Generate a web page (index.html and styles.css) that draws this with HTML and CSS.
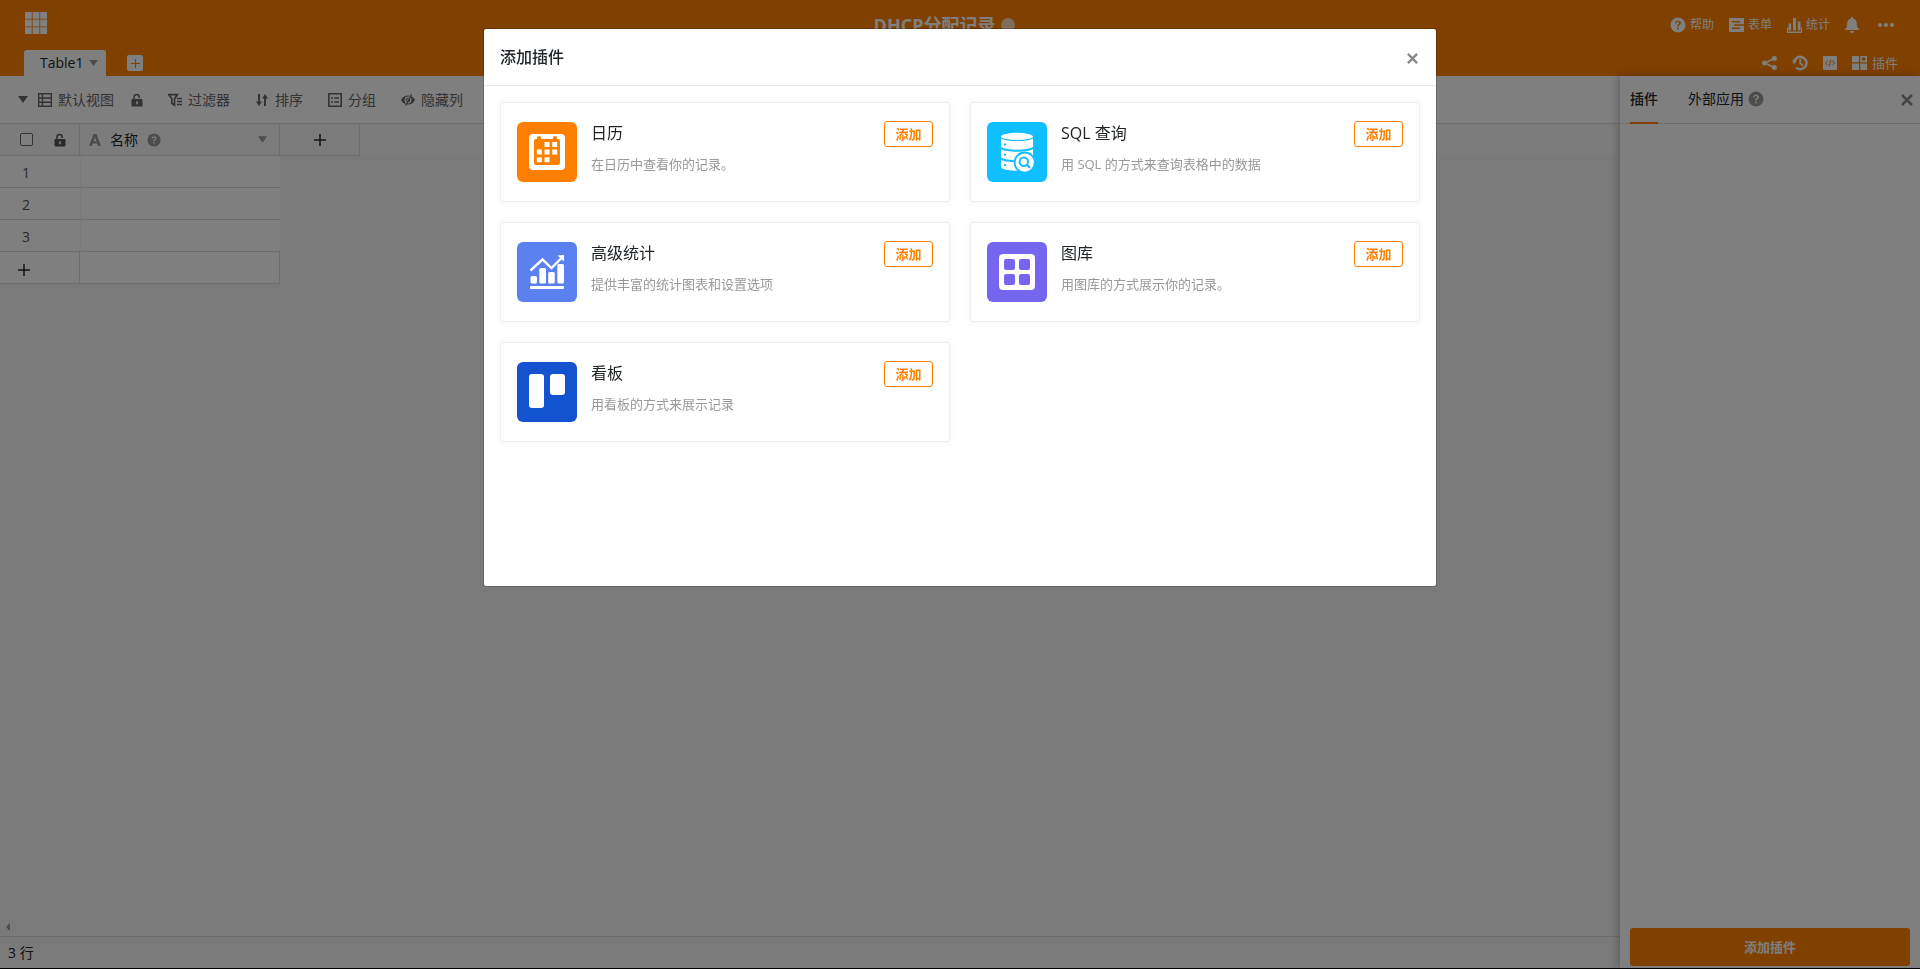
FILE: index.html
```html
<!DOCTYPE html>
<html lang="zh-CN">
<head>
  <meta charset="UTF-8" />
  <meta name="viewport" content="width=device-width, initial-scale=1" />
  <title>DHCP分配记录</title>
  <link rel="stylesheet" href="styles.css">
</head>
<body>
  <!-- shared icons -->
  <svg class="sprite" aria-hidden="true">
    <symbol id="icon-lock" viewBox="0 0 12 14">
      <path d="M3 7V4a2.6 2.6 0 0 1 5.2 0v1" fill="none" stroke="currentColor" stroke-width="1.5"/>
      <path fill-rule="evenodd" d="M1.500 6h9a1 1 0 0 1 1 1v5.500a1 1 0 0 1-1 1h-9a1 1 0 0 1-1-1V7a1 1 0 0 1 1-1zM5.200 8.200v3h1.600v-3z"/>
    </symbol>
    <symbol id="icon-help" viewBox="0 0 16 16">
      <path fill-rule="evenodd" d="M8 .5a7.500 7.500 0 1 1 0 15a7.500 7.500 0 0 1 0-15zM5.300 6.300h1.500c0-.8.5-1.300 1.200-1.300s1.200.4 1.200 1c0 .6-.3.9-.9 1.300-.8.5-1.100 1-1.100 2v.2h1.500c0-.6.2-.9.9-1.400.8-.5 1.200-1.100 1.200-2.100 0-1.400-1.100-2.300-2.700-2.300-1.700 0-2.800 1-2.800 2.600zM7.100 10.700v1.600h1.700v-1.600z"/>
    </symbol>
    <symbol id="icon-close" viewBox="0 0 12 12">
      <path d="M1 1l10 10M11 1L1 11" fill="none" stroke="currentColor" stroke-width="2.600"/>
    </symbol>
    <symbol id="icon-caret" viewBox="0 0 10 7">
      <path d="M0 0h10L5 7z"/>
    </symbol>
    <symbol id="icon-plus" viewBox="0 0 12 12">
      <path d="M6 0v12M0 6h12" fill="none" stroke="currentColor" stroke-width="1.500"/>
    </symbol>
  </svg>

  <div class="app">
    <header class="header">
      <div class="header-top">
        <a class="logo" href="#" aria-label="首页">
          <svg width="22" height="22" viewBox="0 0 22 22"><path d="M0 0h6.800v6.800H0zM7.600 0h6.800v6.800H7.600zM15.200 0H22v6.800h-6.800zM0 7.600h6.800v6.800H0zM7.600 7.600h6.800v6.800H7.600zM15.200 7.600H22v6.800h-6.800zM0 15.200h6.800V22H0zM7.600 15.200h6.800V22H7.600zM15.200 15.200H22V22h-6.800z"/></svg>
        </a>
        <h1 class="base-name">DHCP分配记录 <span class="base-dot"></span></h1>
        <div class="header-actions">
          <button class="header-btn"><svg width="16" height="16"><use href="#icon-help"/></svg>帮助</button>
          <button class="header-btn">
            <svg width="15" height="14" viewBox="0 0 15 14"><path fill-rule="evenodd" d="M1 0h13a1 1 0 0 1 1 1v12a1 1 0 0 1-1 1H1a1 1 0 0 1-1-1V1a1 1 0 0 1 1-1zM3 3v1.500h8V3zM5 6.300v1.500h10V6.300zM3 9.600v1.500h8V9.600z"/></svg>表单
          </button>
          <button class="header-btn">
            <svg width="15" height="15" viewBox="0 0 15 15"><path d="M1.500 5.500h2.700v7H1.500zM6 0h3v12.500H6zM10.800 3.500h2.700v9h-2.700zM0 9.500h1v4h13v-4h1V15H0z"/></svg>统计
          </button>
          <button class="header-btn" aria-label="通知">
            <svg width="14" height="16" viewBox="0 0 14 16"><path d="M7 0a1.200 1.200 0 0 1 1.200 1.200v.4C10.600 2.200 11.800 4 11.800 6.500c0 3.200.6 4.300 2.200 5.500v1H0v-1c1.600-1.200 2.200-2.300 2.200-5.500 0-2.500 1.200-4.300 3.600-4.900v-.4A1.200 1.200 0 0 1 7 0zM5 14h4a2 2 0 0 1-4 0z"/></svg>
          </button>
          <button class="header-btn" aria-label="更多">
            <svg width="16" height="4" viewBox="0 0 16 4"><circle cx="2" cy="2" r="2"/><circle cx="8" cy="2" r="2"/><circle cx="14" cy="2" r="2"/></svg>
          </button>
        </div>
      </div>
      <div class="header-tabs">
        <button class="table-tab">Table1 <svg width="9" height="6"><use href="#icon-caret"/></svg></button>
        <button class="add-tab" aria-label="添加表"><svg width="9" height="9"><use href="#icon-plus"/></svg></button>
        <div class="tab-actions">
          <button class="header-btn" aria-label="共享">
            <svg width="15" height="14" viewBox="0 0 15 14"><path d="M12 2.500L3 7l9 4.500" fill="none" stroke="currentColor" stroke-width="1.500"/><circle cx="12.300" cy="2.500" r="2.500"/><circle cx="2.500" cy="7" r="2.500"/><circle cx="12.300" cy="11.500" r="2.500"/></svg>
          </button>
          <button class="header-btn" aria-label="历史">
            <svg width="16" height="16" viewBox="0 0 16 16"><path d="M2.200 7A6.200 6.200 0 1 1 4 12.500" fill="none" stroke="currentColor" stroke-width="2.400"/><path d="M0 5.500h5L2.400 9.300z"/><path d="M8.200 4v4.500l3 2" fill="none" stroke="currentColor" stroke-width="1.800"/></svg>
          </button>
          <button class="header-btn" aria-label="脚本">
            <svg width="14" height="14" viewBox="0 0 14 14"><rect width="14" height="14" rx="1"/><path class="cut" d="M4.800 4.500L2.500 7l2.300 2.500M9.200 4.500L11.500 7 9.200 9.500M7.800 3.800L6.200 10.200"/></svg>
          </button>
          <button class="header-btn header-btn-plugin">
            <svg width="15" height="14" viewBox="0 0 15 14"><path fill-rule="evenodd" d="M0 0h7v6.300H0zM8.200 0H15v6.300H8.200zM10 1.600v3h3.300v-3zM0 7.600h7V14H0zM8.200 7.600H15V14H8.200z"/></svg>插件
          </button>
        </div>
      </div>
    </header>

    <div class="workspace">
      <main class="table-view">
        <div class="toolbar">
          <button class="tool tool-caret" aria-label="视图列表"><svg width="10" height="7"><use href="#icon-caret"/></svg></button>
          <button class="tool">
            <svg width="14" height="14" viewBox="0 0 14 14"><path d="M.7.7h12.600v12.600H.7zM.7 5h12.600M.7 9.200h12.600M4.500.7v12.600" fill="none" stroke="currentColor" stroke-width="1.400"/></svg>默认视图
          </button>
          <button class="tool tool-lock" aria-label="锁定视图"><svg width="12" height="14"><use href="#icon-lock"/></svg></button>
          <button class="tool">
            <svg width="14" height="14" viewBox="0 0 14 14"><path d="M.8 1.700h8.600L6.500 5.800v6.500l-2.700-2V5.800zM9 5.500h5M9 8.500h5M9 11.500h5" fill="none" stroke="currentColor" stroke-width="1.700"/></svg>过滤器
          </button>
          <button class="tool">
            <svg width="14" height="14" viewBox="0 0 14 14"><path d="M4 1v10M10 13V3" fill="none" stroke="currentColor" stroke-width="2"/><path d="M1 8.500h6L4 13zM13 5.500H7L10 1z"/></svg>排序
          </button>
          <button class="tool">
            <svg width="14" height="14" viewBox="0 0 14 14"><path d="M.8.8h12.400v12.400H.8zM3 5h2M6.300 5H11M3 9h2M6.300 9H11" fill="none" stroke="currentColor" stroke-width="1.600"/></svg>分组
          </button>
          <button class="tool">
            <svg width="14" height="12" viewBox="0 0 14 12"><path fill-rule="evenodd" d="M0 6c1.600-3 4-4.600 7-4.600S12.400 3 14 6c-1.600 3-4 4.600-7 4.600S1.600 9 0 6zM3.600 6a3.400 3.400 0 0 0 6.800 0a3.400 3.400 0 0 0-6.800 0zM4.800 6a2.200 2.200 0 0 1 4.400 0a2.200 2.200 0 0 1-4.400 0z"/><path class="slash" d="M9.700 0L3.700 11.500"/><path d="M10.600.3L4.600 11.800" fill="none" stroke="currentColor" stroke-width="1.200"/></svg>隐藏列
          </button>
        </div>

        <div class="grid">
          <table class="records">
            <thead>
              <tr>
                <th class="col-index">
                  <div class="index-head">
                    <input type="checkbox" aria-label="全选">
                    <svg width="12" height="14"><use href="#icon-lock"/></svg>
                  </div>
                </th>
                <th class="col-name">
                  <div class="name-head">
                    <svg class="muted" width="12" height="12" viewBox="0 0 12 12"><path fill-rule="evenodd" d="M4.500 0h3L12 12H9.200L8.200 9.400H3.800L2.800 12H0zM6 3.200L4.600 7.200h2.800z"/></svg>
                    <span>名称</span>
                    <svg class="muted" width="14" height="14"><use href="#icon-help"/></svg>
                    <svg class="muted name-caret" width="9" height="7"><use href="#icon-caret"/></svg>
                  </div>
                </th>
                <th class="col-add"><button class="plus" aria-label="添加列"><svg width="12" height="12"><use href="#icon-plus"/></svg></button></th>
                <th class="col-rest"></th>
              </tr>
            </thead>
            <tbody>
              <tr><td class="index">1</td><td class="cell"></td></tr>
              <tr><td class="index">2</td><td class="cell"></td></tr>
              <tr><td class="index">3</td><td class="cell"></td></tr>
              <tr class="add-row"><td class="index"><button class="plus" aria-label="添加行"><svg width="12" height="12"><use href="#icon-plus"/></svg></button></td><td class="cell"></td></tr>
            </tbody>
          </table>
          <svg class="scroll-arrow" width="4" height="8" viewBox="0 0 4 8"><path d="M4 0v8L0 4z"/></svg>
        </div>
        <div class="table-footer">3 行</div>
      </main>

      <aside class="side-panel">
        <div class="panel-head">
          <button class="panel-tab active">插件</button>
          <button class="panel-tab">外部应用 <svg width="16" height="16"><use href="#icon-help"/></svg></button>
          <button class="panel-close" aria-label="关闭面板"><svg width="12" height="12"><use href="#icon-close"/></svg></button>
        </div>
        <div class="panel-body"></div>
        <button class="panel-add">添加插件</button>
      </aside>
    </div>
  </div>

  <div class="overlay">
    <section class="modal" role="dialog" aria-labelledby="modal-title">
      <div class="modal-head">
        <h2 id="modal-title">添加插件</h2>
        <button class="modal-close" aria-label="关闭"><svg width="11" height="11"><use href="#icon-close"/></svg></button>
      </div>
      <div class="modal-body">
        <article class="plugin">
          <svg class="plugin-icon" width="60" height="60" viewBox="0 0 60 60">
            <rect width="60" height="60" rx="6" fill="#ff8000"/>
            <rect x="12" y="12" width="36" height="36" rx="4" fill="#fff"/>
            <path fill="#ff8000" d="M19 17h1v-1a1.500 1.500 0 0 1 4 0v1h12v-1a1.500 1.500 0 0 1 4 0v1h1a2 2 0 0 1 2 2v22a2 2 0 0 1-2 2H19a2 2 0 0 1-2-2V19a2 2 0 0 1 2-2z"/>
            <path fill="#fff" d="M27.500 20h5v5h-5zM35.200 20h5v5h-5zM19.800 27.500h5v5h-5zM27.500 27.500h5v5h-5zM35.200 27.500h5v5h-5zM19.800 35.200h5v5h-5zM27.500 35.200h5v5h-5z"/>
          </svg>
          <div class="plugin-text">
            <h3>日历</h3>
            <p>在日历中查看你的记录。</p>
          </div>
          <button class="plugin-add">添加</button>
        </article>

        <article class="plugin">
          <svg class="plugin-icon" width="60" height="60" viewBox="0 0 60 60">
            <rect width="60" height="60" rx="6" fill="#0fbfff"/>
            <ellipse cx="30" cy="14.500" rx="16" ry="3.700" fill="#fff"/>
            <path fill="#fff" d="M14 16.500c4 3.400 28 3.400 32 0v8.200c-4 4-28 4-32 0zM14 27c4 3.600 28 3.600 32 0v8.200c-4 4-28 4-32 0zM14 37.400c4 3.600 28 3.600 32 0v8c-4 4.300-28 4.300-32 0z"/>
            <path fill="#0fbfff" d="M17 21.500h2v2h-2zM17 31.800h2v2h-2zM17 42h2v2h-2z"/>
            <circle cx="37.700" cy="40.600" r="11" fill="#0fbfff"/>
            <circle cx="37.700" cy="40.600" r="9.200" fill="#fff"/>
            <circle cx="36.800" cy="39.700" r="4.200" fill="none" stroke="#0fbfff" stroke-width="2"/>
            <path d="M39.800 42.700l3.200 3.200" stroke="#0fbfff" stroke-width="2.200"/>
          </svg>
          <div class="plugin-text">
            <h3>SQL 查询</h3>
            <p>用 SQL 的方式来查询表格中的数据</p>
          </div>
          <button class="plugin-add">添加</button>
        </article>

        <article class="plugin">
          <svg class="plugin-icon" width="60" height="60" viewBox="0 0 60 60">
            <rect width="60" height="60" rx="6" fill="#5a81ef"/>
            <path d="M13.500 28.500L25.500 17.500l9 8.500L44 16.500" fill="none" stroke="#fff" stroke-width="2.400"/>
            <path fill="#fff" d="M47 13v6.500L40.500 13.500z"/>
            <rect x="13.500" y="34" width="6.500" height="7.500" rx="1.500" fill="#fff"/>
            <rect x="22.300" y="26" width="6.700" height="15.500" rx="1.500" fill="#fff"/>
            <rect x="31.200" y="30" width="6.600" height="11.500" rx="1.500" fill="#fff"/>
            <rect x="40.300" y="22" width="6.700" height="19.500" rx="1.500" fill="#fff"/>
            <rect x="13" y="44" width="34" height="3" rx="1" fill="#fff"/>
          </svg>
          <div class="plugin-text">
            <h3>高级统计</h3>
            <p>提供丰富的统计图表和设置选项</p>
          </div>
          <button class="plugin-add">添加</button>
        </article>

        <article class="plugin">
          <svg class="plugin-icon" width="60" height="60" viewBox="0 0 60 60">
            <rect width="60" height="60" rx="6" fill="#7666ef"/>
            <rect x="12" y="12" width="36" height="36" rx="4" fill="#fff"/>
            <g fill="#7666ef"><rect x="17" y="17" width="11" height="11" rx="2"/><rect x="32" y="17" width="11" height="11" rx="2"/><rect x="17" y="32" width="11" height="11" rx="2"/><rect x="32" y="32" width="11" height="11" rx="2"/></g>
          </svg>
          <div class="plugin-text">
            <h3>图库</h3>
            <p>用图库的方式展示你的记录。</p>
          </div>
          <button class="plugin-add">添加</button>
        </article>

        <article class="plugin">
          <svg class="plugin-icon" width="60" height="60" viewBox="0 0 60 60">
            <rect width="60" height="60" rx="6" fill="#1453cf"/>
            <rect x="12" y="12" width="15" height="34" rx="3" fill="#fff"/>
            <rect x="33" y="12" width="15" height="21" rx="3" fill="#fff"/>
          </svg>
          <div class="plugin-text">
            <h3>看板</h3>
            <p>用看板的方式来展示记录</p>
          </div>
          <button class="plugin-add">添加</button>
        </article>
      </div>
    </section>
  </div>
</body>
</html>
```

FILE: styles.css
```css
* {
  box-sizing: border-box;
}
body {
  margin: 0;
  font-family: 'Open Sans', 'Noto Sans CJK SC', sans-serif;
  font-size: 14px;
  line-height: 20px;
  color: #212529;
}
h1, h2, h3, p {
  margin: 0;
  font-weight: 400;
}
button {
  display: flex;
  align-items: center;
  padding: 0;
  border: none;
  background: none;
  font: inherit;
  color: inherit;
  white-space: nowrap;
  cursor: pointer;
}
svg {
  display: block;
  flex-shrink: 0;
  fill: currentColor;
}
.sprite {
  display: none;
}
.app {
  display: flex;
  flex-direction: column;
  height: 100vh;
  border-bottom: 1px solid #000;
}

/* header */
.header {
  background-color: #ff8000;
  color: #fff;
}
.header-top {
  display: grid;
  grid-template-columns: 1fr auto 1fr;
  align-items: center;
  height: 50px;
  padding: 0 26px 4px 25px;
}
.logo {
  width: 22px;
  color: #fff;
}
.base-name {
  display: flex;
  align-items: center;
  gap: 6px;
  padding: 4px 30px 0 0;
  font-size: 18px;
  line-height: 24px;
  font-weight: 700;
}
.base-dot {
  width: 14px;
  height: 14px;
  border-radius: 50%;
  background-color: #ffd9b3;
}
.header-actions {
  display: flex;
  justify-content: flex-end;
  gap: 15px;
  padding-top: 4px;
}
.header-actions .header-btn:last-child {
  margin-left: 4px;
}
.header-btn {
  gap: 4px;
  font-size: 12px;
}
.header-tabs {
  display: flex;
  align-items: center;
  height: 26px;
  padding: 0 22px 0 24px;
}
.table-tab {
  gap: 6px;
  height: 26px;
  padding: 0 8px 0 16px;
  border-radius: 3px 3px 0 0;
  background-color: #fff;
  color: #212529;
}
.table-tab svg {
  color: #999;
}
.add-tab {
  justify-content: center;
  width: 16px;
  height: 16px;
  margin-left: 21px;
  border-radius: 2px;
  background-color: #fff;
  color: #ff8000;
}
.tab-actions {
  display: flex;
  gap: 15px;
  margin-left: auto;
}
.header-btn-plugin {
  gap: 5px;
  font-size: 13px;
}
.cut {
  fill: none;
  stroke: #ff8000;
}

/* table view */
.workspace {
  display: flex;
  flex: 1;
  min-height: 0;
}
.table-view {
  display: flex;
  flex: 1;
  flex-direction: column;
  min-width: 0;
  background-color: #f5f5f5;
}
.toolbar {
  display: flex;
  align-items: center;
  gap: 25px;
  height: 48px;
  padding: 0 18px;
  border-bottom: 1px solid #dbdbdb;
  background-color: #fff;
  color: #666;
}
.tool {
  gap: 6px;
}
.tool-caret {
  margin-right: -15px;
}
.tool-lock {
  margin-left: -8px;
}
.slash {
  fill: none;
  stroke: #fff;
}
.grid {
  display: flex;
  flex: 1;
  flex-direction: column;
  justify-content: space-between;
}
.records {
  width: 100%;
  border-collapse: separate;
  border-spacing: 0;
  table-layout: fixed;
}
.records th {
  height: 32px;
  padding: 0;
  border-right: 1px solid #dbdbdb;
  border-bottom: 1px solid #dbdbdb;
  background-color: #f9f9f9;
  font-weight: 400;
}
.records .col-index {
  width: 80px;
}
.records .col-name {
  width: 200px;
}
.records .col-add {
  width: 80px;
}
.records .col-rest {
  border: none;
}
.records td {
  height: 32px;
  padding: 0;
  border-bottom: 1px solid #dbdbdb;
  background-color: #fff;
}
.records .cell {
  border-left: 1px solid #f4f4f4;
}
.records .index {
  padding: 2px 0 0 22px;
  color: #555;
}
.records .add-row .index {
  padding: 4px 0 0 18px;
}
.records .add-row td {
  border-right: 1px solid #dbdbdb;
  border-left: none;
}
.index-head {
  display: flex;
  align-items: center;
  gap: 21px;
  padding-left: 20px;
  color: #555;
}
.index-head input {
  appearance: none;
  width: 13px;
  height: 13px;
  margin: 0;
  border: 1px solid #666;
  border-radius: 2px;
  background-color: #fff;
}
.name-head {
  display: flex;
  align-items: center;
  gap: 9px;
  padding: 0 12px 0 9px;
}
.muted {
  color: #999;
}
.name-caret {
  margin-left: auto;
}
.col-add .plus {
  margin: 0 auto;
}
.plus {
  color: #212529;
}
.scroll-arrow {
  margin: 0 6px 5px;
  color: #999;
}
.table-footer {
  height: 32px;
  padding: 6px 8px;
  border-top: 1px solid #dbdbdb;
}

/* plugin side panel */
.side-panel {
  display: flex;
  flex-direction: column;
  width: 300px;
  background-color: #fff;
  box-shadow: -2px 0 8px rgba(0, 0, 0, 0.25);
}
.panel-head {
  display: flex;
  gap: 30px;
  height: 48px;
  padding: 0 7px 0 10px;
  border-bottom: 1px solid #dbdbdb;
}
.panel-tab {
  gap: 4px;
  height: 48px;
  border-bottom: 2px solid transparent;
}
.panel-tab svg {
  color: #999;
}
.panel-tab.active {
  border-color: #ff8000;
  font-weight: 500;
}
.panel-close {
  margin-left: auto;
  color: #888;
}
.panel-body {
  flex: 1;
}
.panel-add {
  justify-content: center;
  height: 38px;
  margin: 0 10px 2px;
  border-radius: 3px;
  background-color: #ff8000;
  color: #fff;
  font-size: 13px;
  font-weight: 700;
}

/* dialog */
.overlay {
  position: fixed;
  inset: 0;
  display: flex;
  align-items: flex-start;
  justify-content: center;
  padding-top: 29px;
  background-color: rgba(0, 0, 0, 0.5);
}
.modal {
  width: 100%;
  max-width: 952px;
  border-radius: 2px;
  background-color: #fff;
  box-shadow: 0 0 0 1px rgba(0, 0, 0, 0.2);
}
.modal-head {
  display: flex;
  align-items: center;
  justify-content: space-between;
  height: 57px;
  padding: 0 18px 0 16px;
  border-bottom: 1px solid #e9e9e9;
}
.modal-head h2 {
  font-size: 16px;
  line-height: 24px;
  font-weight: 500;
}
.modal-close {
  padding-top: 2px;
  color: #888;
}
.modal-body {
  display: grid;
  grid-template-columns: 1fr 1fr;
  align-content: start;
  gap: 20px;
  min-height: 500px;
  padding: 16px;
}
.plugin {
  display: flex;
  align-items: flex-start;
  height: 100px;
  padding: 18px 16px;
  border: 1px solid #eee;
  border-radius: 3px;
  box-shadow: 0 0 5px rgba(0, 0, 0, 0.06);
}
.plugin-icon {
  margin-top: 1px;
}
.plugin-text {
  flex: 1;
  padding-left: 14px;
}
.plugin-text h3 {
  font-size: 16px;
  line-height: 24px;
}
.plugin-text p {
  margin-top: 9px;
  font-size: 13px;
  color: #999;
}
.plugin-add {
  justify-content: center;
  width: 49px;
  height: 26px;
  border: 1px solid #ff8000;
  border-radius: 3px;
  color: #ff8000;
  font-size: 13px;
  font-weight: 700;
}
```
